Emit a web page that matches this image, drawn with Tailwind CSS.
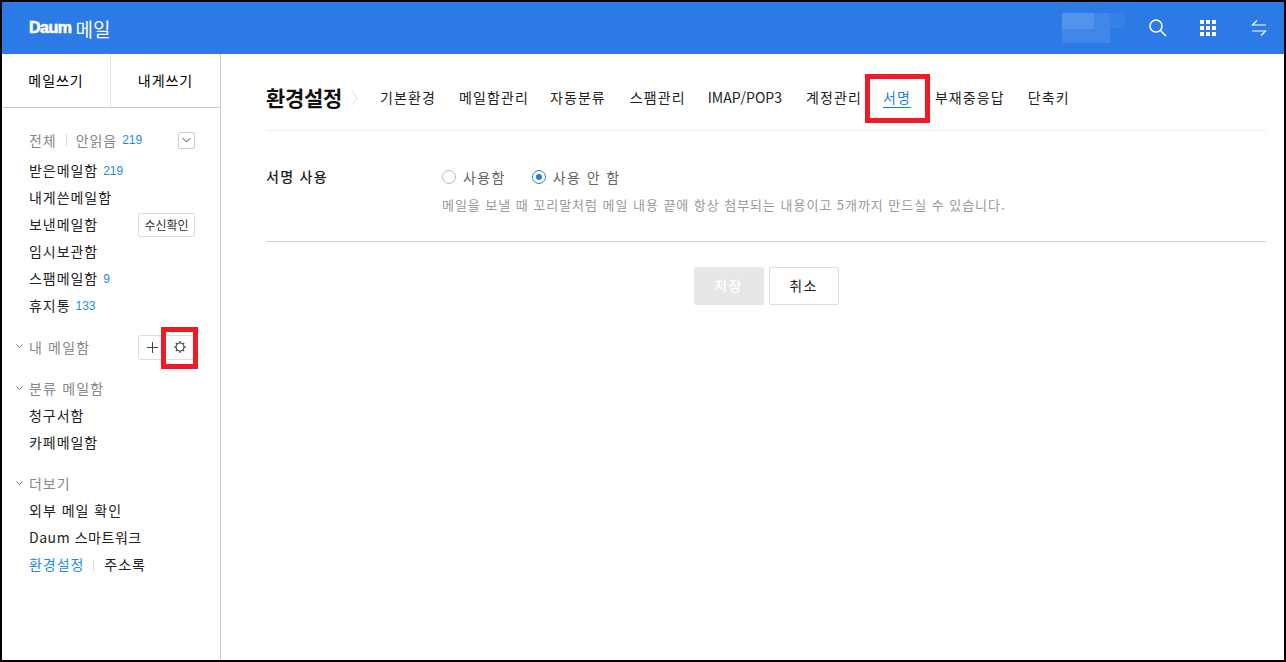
<!DOCTYPE html>
<html lang="ko">
<head>
    <meta charset="UTF-8">
    <title>Daum 메일</title>
    <script src="https://cdn.jsdelivr.net/npm/@tailwindcss/browser@4"></script>
</head>
<body class="bg-white">
    <div class="relative flex flex-col h-[662px] w-[1286px] border-2 border-black overflow-hidden font-['Noto_Sans_CJK_KR','Liberation_Sans',sans-serif] text-[14px] text-[#222]">
        <!-- header -->
        <header class="flex items-center h-[52px] shrink-0 bg-[#2b7ae5] text-white">
            <div class="flex items-center ml-[27px]">
                <span class="font-['Liberation_Sans',sans-serif] font-bold text-[16px] tracking-[-0.5px] leading-none [-webkit-text-stroke:0.6px_white]">Daum</span>
                <span class="ml-[4px] text-[19px] leading-none">메일</span>
            </div>
            <div class="ml-auto flex items-center">
                <div class="flex mr-[23px] h-[30px] w-[63px]">
                    <div class="w-[48px] h-[30px] bg-white/10">
                        <div class="w-[32px] h-[16px] bg-white/10"></div>
                    </div>
                    <div class="w-[15px] h-[15px] bg-white/5"></div>
                </div>
                <svg class="mr-[32px]" width="20" height="20" viewBox="0 0 20 20" fill="none" stroke="white" stroke-width="1.5"><circle cx="8" cy="8" r="6"/><path d="M12.5 12.5L18 18"/></svg>
                <div class="grid grid-cols-3 gap-[2px] w-[16px] mr-[35px]">
                    <i class="size-[4px] bg-white"></i><i class="size-[4px] bg-white"></i><i class="size-[4px] bg-white"></i>
                    <i class="size-[4px] bg-white"></i><i class="size-[4px] bg-white"></i><i class="size-[4px] bg-white"></i>
                    <i class="size-[4px] bg-white"></i><i class="size-[4px] bg-white"></i><i class="size-[4px] bg-white"></i>
                </div>
                <svg class="mr-[17px]" width="16" height="18" viewBox="0 0 16 18" fill="none" stroke="white" stroke-width="1.2"><path d="M15 6H1.5L6 1.5"/><path d="M1 12h13.5L10 16.5"/></svg>
            </div>
        </header>

        <div class="flex flex-1 min-h-0">
            <!-- sidebar -->
            <aside class="w-[219px] shrink-0 border-r border-[#c9c9c9] tracking-[0.95px]">
                <div class="flex h-[54px] border-b border-[#b7cde0] text-black">
                    <div class="w-[109px] flex items-center justify-center border-r border-[#e1e1e1]">메일쓰기</div>
                    <div class="flex-1 flex items-center justify-center">내게쓰기</div>
                </div>

                <div class="pl-[27px] pr-[25px] pt-[22px]">
                    <div class="flex items-center h-[20px] text-[#888]">
                        <span>전체</span>
                        <span class="w-px h-[12px] bg-[#ddd] mx-[9px]"></span>
                        <span>안읽음</span>
                        <span class="ml-[5px] text-[12px] text-[#1e8ce6] tracking-normal font-['Liberation_Sans',sans-serif]">219</span>
                        <span class="ml-auto size-[17px] border border-[#ccc] rounded-[2px] flex items-center justify-center">
                            <svg width="9" height="6" viewBox="0 0 9 6" fill="none" stroke="#555"><path d="M.5 1l4 4 4-4"/></svg>
                        </span>
                    </div>

                    <ul class="mt-[7px]">
                        <li class="flex items-center h-[27px]">받은메일함<span class="ml-[5px] text-[12px] text-[#1e8ce6] tracking-normal font-['Liberation_Sans',sans-serif]">219</span></li>
                        <li class="flex items-center h-[27px]">내게쓴메일함</li>
                        <li class="flex items-center h-[27px]">보낸메일함<span class="ml-auto flex items-center justify-center w-[57px] h-[24px] border border-[#ddd] rounded-[2px] text-[12px] tracking-normal text-[#333]">수신확인</span></li>
                        <li class="flex items-center h-[27px]">임시보관함</li>
                        <li class="flex items-center h-[27px]">스팸메일함<span class="ml-[5px] text-[12px] text-[#1e8ce6] tracking-normal font-['Liberation_Sans',sans-serif]">9</span></li>
                        <li class="flex items-center h-[27px]">휴지통<span class="ml-[5px] text-[12px] text-[#1e8ce6] tracking-normal font-['Liberation_Sans',sans-serif]">133</span></li>
                    </ul>

                    <div class="flex items-center h-[26px] mt-[15px] text-[#888] relative">
                        <svg class="absolute -left-[13px] top-[10px]" width="7" height="5" viewBox="0 0 7 5" fill="none" stroke="#777"><path d="M.5.5l3 3 3-3"/></svg>
                        <span class="tracking-[1.15px]">내 메일함</span>
                        <div class="ml-auto flex w-[57px] h-[25px] border border-[#ddd] rounded-[2px]">
                            <span class="flex-1 flex items-center justify-center">
                                <svg width="13" height="13" viewBox="0 0 13 13" stroke="#444"><path d="M6.5 1v11M1 6.5h11"/></svg>
                            </span>
                            <span class="flex-1 flex items-center justify-center">
                                <svg width="14" height="14" viewBox="0 0 14 14" fill="none" stroke="#444" stroke-width="1.2"><circle cx="7" cy="7" r="4"/><path d="M7 1v2M7 11v2M1 7h2M11 7h2M2.8 2.8l1.4 1.4M9.8 9.8l1.4 1.4M11.2 2.8L9.8 4.2M4.2 9.8l-1.4 1.4"/></svg>
                            </span>
                        </div>
                    </div>

                    <div class="flex items-center h-[27px] mt-[15px] text-[#888] relative">
                        <svg class="absolute -left-[13px] top-[11px]" width="7" height="5" viewBox="0 0 7 5" fill="none" stroke="#777"><path d="M.5.5l3 3 3-3"/></svg>
                        <span class="tracking-[1.15px]">분류 메일함</span>
                    </div>
                    <ul>
                        <li class="flex items-center h-[27px]">청구서함</li>
                        <li class="flex items-center h-[27px]">카페메일함</li>
                    </ul>

                    <div class="flex items-center h-[27px] mt-[14px] text-[#888] relative">
                        <svg class="absolute -left-[13px] top-[11px]" width="7" height="5" viewBox="0 0 7 5" fill="none" stroke="#777"><path d="M.5.5l3 3 3-3"/></svg>
                        <span>더보기</span>
                    </div>
                    <ul>
                        <li class="flex items-center h-[27px] tracking-[1px]">외부 메일 확인</li>
                        <li class="flex items-center h-[27px] tracking-[0.55px]">Daum 스마트워크</li>
                        <li class="flex items-center h-[27px]">
                            <span class="text-[#1e8ce6]">환경설정</span>
                            <span class="w-px h-[12px] bg-[#ddd] ml-[9px] mr-[10px]"></span>
                            <span>주소록</span>
                        </li>
                    </ul>
                </div>
            </aside>

            <!-- main -->
            <main class="flex-1 pl-[45px] pr-[18px]">
                <div class="flex items-center h-[77px] border-b border-[#ececec] pt-[11px]">
                    <h1 class="text-[21px] font-bold text-[#111] tracking-[-0.3px]">환경설정</h1>
                    <svg class="ml-[9px] mr-[22px]" width="7" height="16" viewBox="0 0 7 16" fill="none" stroke="#ddd"><path d="M1 1l5 7-5 7"/></svg>
                    <nav class="flex items-center tracking-[1.1px] text-[14px]">
                        <span class="mr-[23px]">기본환경</span>
                        <span class="mr-[21px]">메일함관리</span>
                        <span class="mr-[24px]">자동분류</span>
                        <span class="mr-[22px]">스팸관리</span>
                        <span class="mr-[24px] tracking-normal">IMAP/POP3</span>
                        <span class="mr-[21px]">계정관리</span>
                        <span class="mr-[24px] text-[#1e7fe0] border-b border-[#1e7fe0] leading-[20px]">서명</span>
                        <span class="mr-[23px]">부재중응답</span>
                        <span>단축키</span>
                    </nav>
                </div>

                <div class="flex h-[111px] border-b border-[#cfcfcf] pt-[35px]">
                    <div class="w-[176px] font-medium tracking-[1.3px] leading-[20px] text-[#222]">서명 사용</div>
                    <div>
                        <div class="flex items-center h-[22px] text-[#666] tracking-[1.4px]">
                            <span class="size-[14px] rounded-full border border-[#bbb] mr-[7px]"></span>
                            <span>사용함</span>
                            <span class="ml-[26px] size-[14px] rounded-full border border-[#2b7ae5] mr-[7px] flex items-center justify-center"><i class="size-[6px] rounded-full bg-[#2b7ae5]"></i></span>
                            <span>사용 안 함</span>
                        </div>
                        <p class="mt-[8px] text-[13px] text-[#999] tracking-[0.96px] leading-[18px]">메일을 보낼 때 꼬리말처럼 메일 내용 끝에 항상 첨부되는 내용이고 5개까지 만드실 수 있습니다.</p>
                    </div>
                </div>

                <div class="flex justify-center gap-[5px] mt-[25px] tracking-[1.3px]">
                    <button class="w-[70px] h-[38px] pb-[2px] bg-[#e6e7e8] rounded-[2px] text-white font-medium">저장</button>
                    <button class="w-[70px] h-[38px] pb-[2px] border border-[#ddd] rounded-[2px] text-[#222]">취소</button>
                </div>
            </main>
        </div>

        <!-- annotation boxes -->
        <div class="absolute left-[159px] top-[325px] w-[37px] h-[42px] border-[5px] border-[#ed1c24]"></div>
        <div class="absolute left-[863px] top-[72px] w-[65px] h-[49px] border-[5px] border-[#ed1c24]"></div>
    </div>
</body>
</html>
